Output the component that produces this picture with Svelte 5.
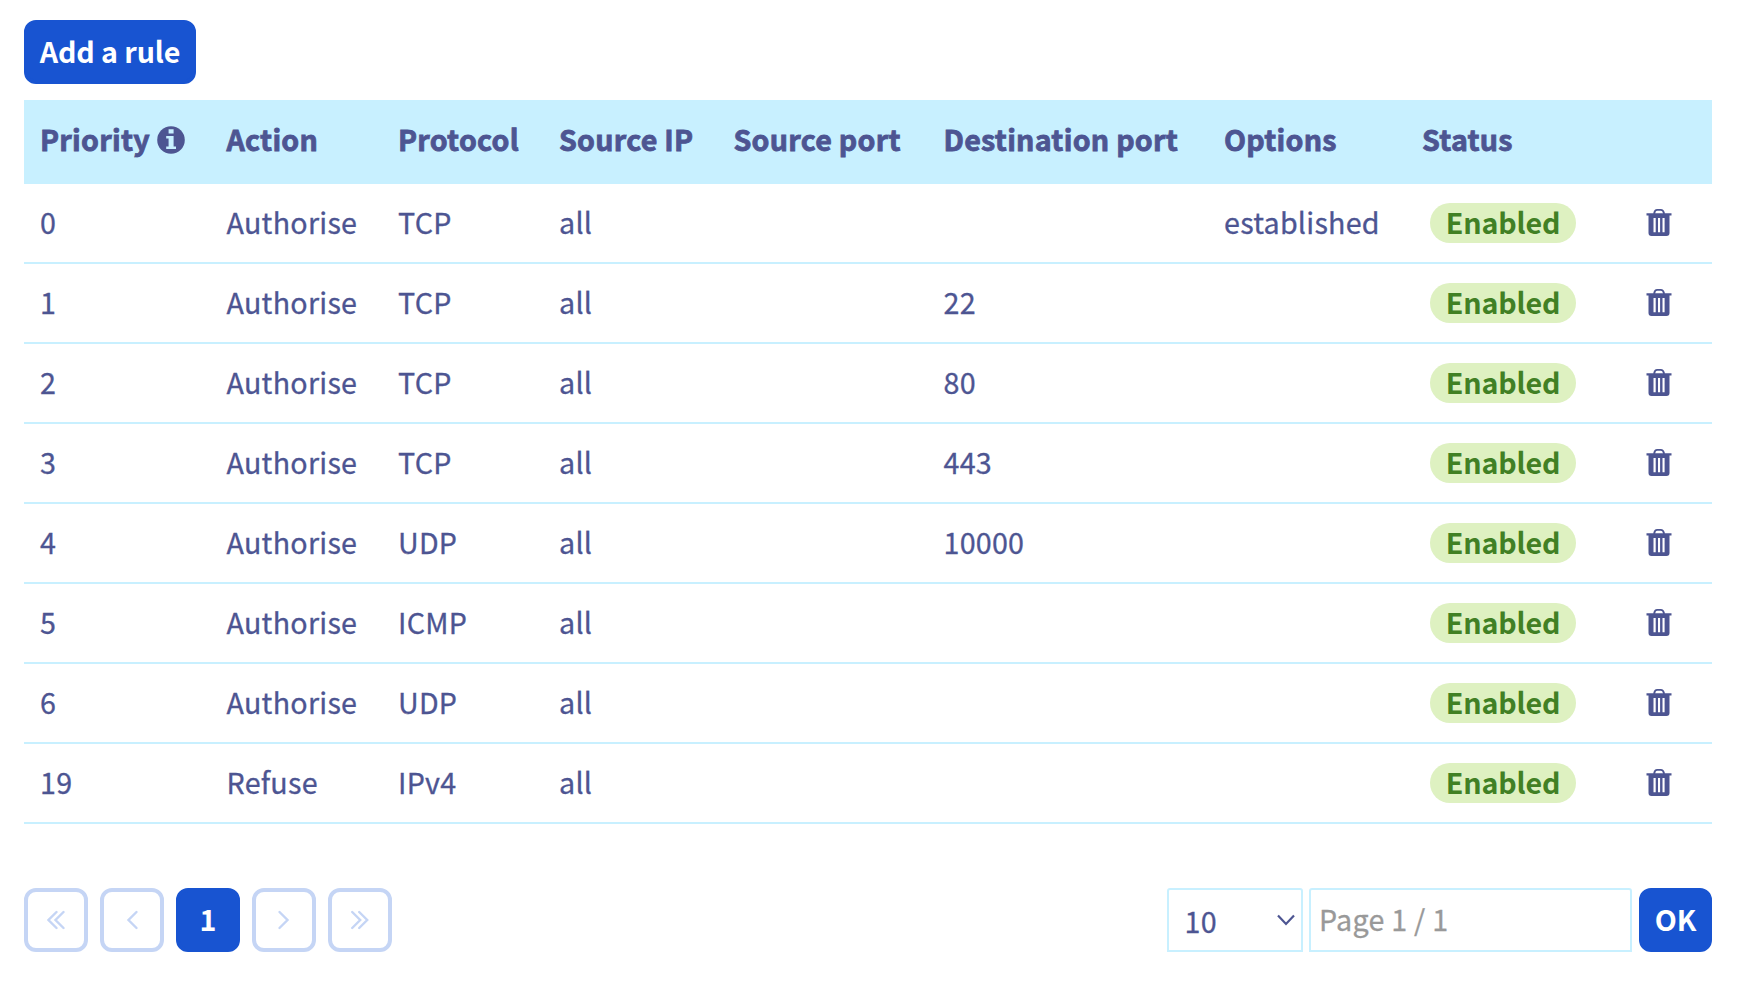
<script>
  const columns = ['Priority', 'Action', 'Protocol', 'Source IP', 'Source port', 'Destination port', 'Options', 'Status'];
  const rules = [
    [0, 'Authorise', 'TCP', 'all', '', '', 'established'],
    [1, 'Authorise', 'TCP', 'all', '', '22', ''],
    [2, 'Authorise', 'TCP', 'all', '', '80', ''],
    [3, 'Authorise', 'TCP', 'all', '', '443', ''],
    [4, 'Authorise', 'UDP', 'all', '', '10000', ''],
    [5, 'Authorise', 'ICMP', 'all', '', '', ''],
    [6, 'Authorise', 'UDP', 'all', '', '', ''],
    [19, 'Refuse', 'IPv4', 'all', '', '', '']
  ];
</script>

<main>
  <button class="primary add">Add a rule</button>

  <div class="table">
    <div class="row head">
      {#each columns as c, i}
        <div class="cell">
          <span>{c}</span>
          {#if i === 0}
            <svg class="info" width="28" height="28" viewBox="0 0 28 28">
              <circle cx="14" cy="14" r="13.8" fill="#4d5592" />
              <path d="M11.6 3.2h5v4.2h-5zM9.2 10h7.400v10.400h2.400v2.600H9.200v-2.600h2.400v-7.800H9.200z" fill="#c8f0ff" />
            </svg>
          {/if}
        </div>
      {/each}
      <div class="cell"></div>
    </div>
    {#each rules as rule}
      <div class="row">
        {#each rule as value}
          <div class="cell"><span>{value}</span></div>
        {/each}
        <div class="cell status"><span class="badge"><span>Enabled</span></span></div>
        <div class="cell trash">
          <svg width="26" height="28" viewBox="0 0 26 28" fill="none" stroke="#4d5592">
            <path d="M8.300 6V5Q8.800 1.900 11.200 1.900h3.600Q17.200 1.900 17.900 5V6" stroke-width="1.900" />
            <path fill="#4d5592" stroke="none" fill-rule="evenodd" d="M.5 5.300h25v2.200h-2V25q0 3-3 3h-15q-3 0-3-3V7.500h-2zM7.500 10v14.300h2.200V10zM12 10v14.300h2.100V10zM16.500 10v14.300h2.100V10z" />
          </svg>
        </div>
      </div>
    {/each}
  </div>

  <footer>
    <div class="pager">
      <button aria-label="First"><svg width="18" height="20" viewBox="0 0 18 20"><path d="M9.500 2 1.500 10l8 8M16.500 2l-8 8 8 8" /></svg></button>
      <button aria-label="Previous"><svg width="18" height="20" viewBox="0 0 18 20"><path d="M13.500 2 5.500 10l8 8" /></svg></button>
      <button class="primary"><span>1</span></button>
      <button aria-label="Next"><svg width="18" height="20" viewBox="0 0 18 20"><path d="m4.500 2 8 8-8 8" /></svg></button>
      <button aria-label="Last"><svg width="18" height="20" viewBox="0 0 18 20"><path d="m1.200 2 8 8-8 8M8.200 2l8 8-8 8" /></svg></button>
    </div>
    <div class="jump">
      <div class="field size">
        <span>10</span>
        <svg width="18" height="12" viewBox="0 0 18 12"><path d="m1 1.500 8 8.500 8-8.500" /></svg>
      </div>
      <div class="field page"><span>Page 1 / 1</span></div>
      <button class="primary ok">OK</button>
    </div>
  </footer>
</main>

<style>
  :global(body) {
    margin: 0;
    background: #fff;
  }
  main {
    box-sizing: border-box;
    width: 1760px;
    height: 994px;
    padding: 20px 48px 0 24px;
    font: 400 28.65px/40px 'Noto Sans CJK SC', 'Source Sans Pro', sans-serif;
    letter-spacing: 0.26px;
    -webkit-text-stroke: 0.3px currentColor;
    color: #4d5592;
    background: #fff;
  }
  button {
    box-sizing: border-box;
    font: inherit;
    height: 64px;
    border: 4px solid #c5d5f5;
    border-radius: 12px;
    background: #fff;
    padding: 0;
    display: flex;
    align-items: center;
    justify-content: center;
  }
  .primary {
    background: #1854d1;
    border-color: #1854d1;
    color: #fff;
    font-weight: 700;
    letter-spacing: -0.1px;
    -webkit-text-stroke: 0;
    padding-bottom: 3px;
  }
  .add {
    width: 172px;
  }
  .table {
    margin-top: 16px;
  }
  .row {
    box-sizing: border-box;
    height: 80px;
    display: grid;
    grid-template-columns: 186.5px 171.5px 161px 174.5px 210px 280.5px 198px 224px 1fr;
    border-bottom: 2px solid #c8f0ff;
  }
  .cell {
    display: flex;
    align-items: center;
    padding: 0 0 3px 16px;
    white-space: nowrap;
  }
  .head {
    height: 84px;
    background: #c8f0ff;
    font-weight: 700;
    letter-spacing: 0.25px;
    -webkit-text-stroke: 0.8px currentColor;
    border: 0;
  }
  .head .cell {
    padding-bottom: 7px;
  }
  .info {
    margin-left: 7px;
    margin-top: 2px;
  }
  .cell.status {
    padding: 0 0 0 24px;
  }
  .badge {
    box-sizing: border-box;
    width: 146px;
    height: 40px;
    padding-bottom: 3px;
    border-radius: 20px;
    background: #def1c1;
    color: #418024;
    font-weight: 700;
    letter-spacing: -0.1px;
    -webkit-text-stroke: 0;
    display: flex;
    align-items: center;
    justify-content: center;
  }
  .cell.trash {
    padding: 0 0 2px 15.5px;
  }
  footer {
    margin-top: 64px;
    display: flex;
    justify-content: space-between;
  }
  .pager {
    display: flex;
    gap: 12px;
  }
  .pager svg {
    fill: none;
    stroke: #c5d5f5;
    stroke-width: 2.4;
    stroke-linecap: round;
  }
  .pager button {
    width: 64px;
  }
  .jump {
    display: flex;
  }
  .field {
    box-sizing: border-box;
    height: 64px;
    border: 2px solid #c8f0ff;
    border-radius: 3px 3px 0 0;
    display: flex;
    align-items: center;
  }
  .size {
    width: 136px;
    padding: 1px 6px 0 15.5px;
    justify-content: space-between;
    margin-right: 6px;
  }
  .size svg {
    fill: none;
    stroke: #4d5592;
    stroke-width: 2.2;
    margin-bottom: 2px;
  }
  .page {
    width: 323px;
    padding: 0 0 2px 8px;
    color: #999;
    margin-right: 7px;
  }
  .ok {
    width: 73px;
  }
</style>
